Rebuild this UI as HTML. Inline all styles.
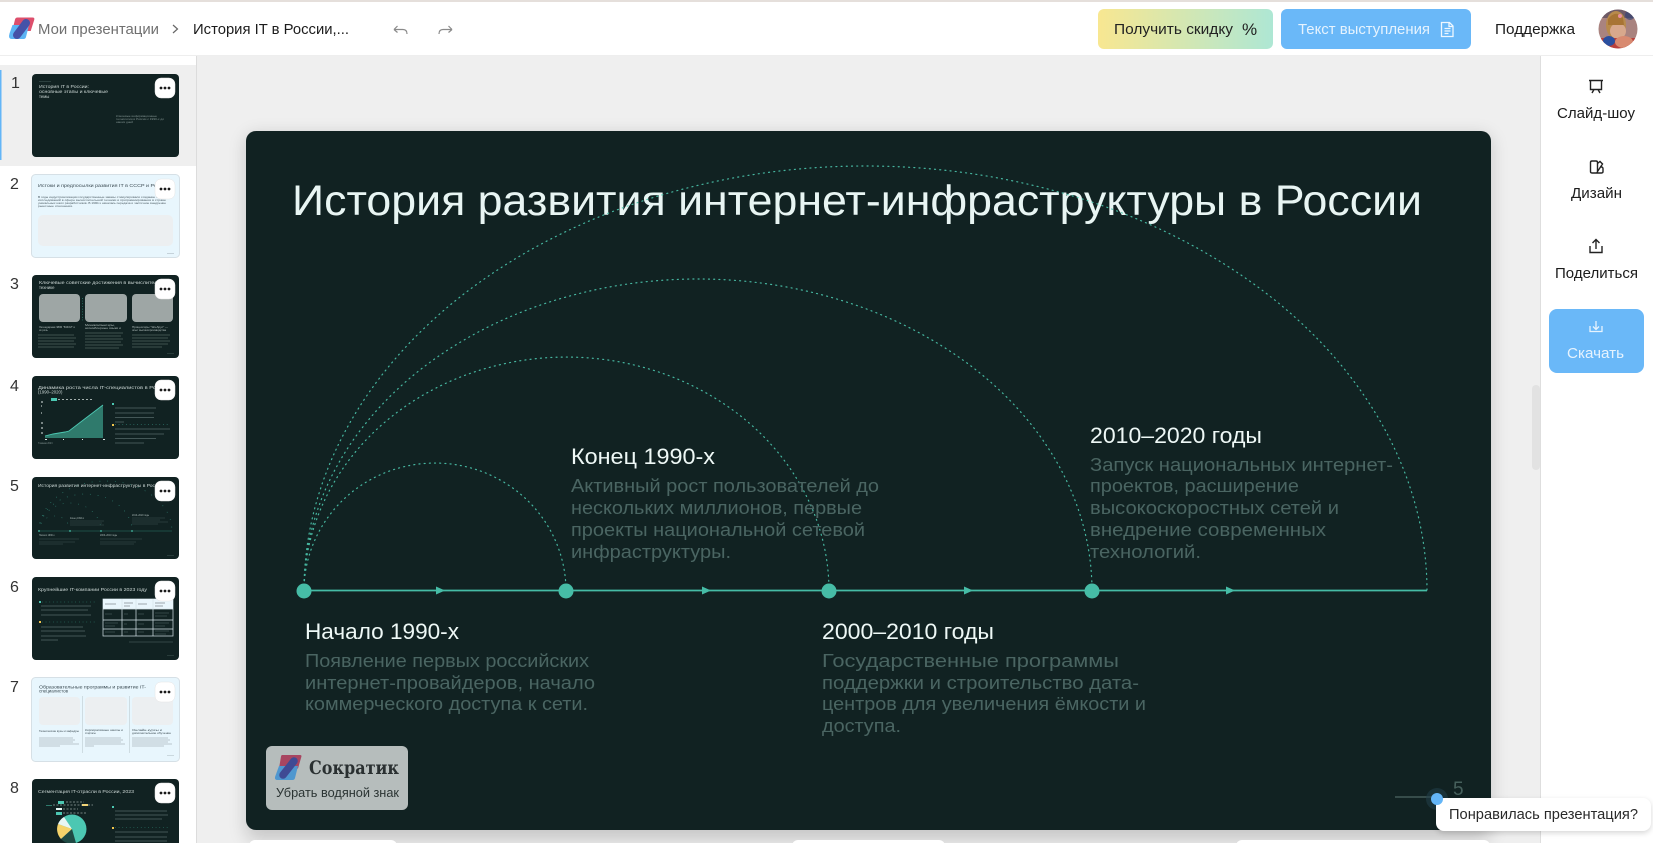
<!DOCTYPE html>
<html lang="ru"><head><meta charset="utf-8"><title>История развития интернет-инфраструктуры</title>
<style>
html,body{margin:0;padding:0;background:#fff;width:1653px;height:843px;overflow:hidden}
svg{display:block}
text{font-family:"Liberation Sans",sans-serif}
.h{font-size:22px;fill:#eef8f6}
.d{font-size:18.5px;fill:#4a6562}
.n{font-size:16px;fill:#333}
</style></head><body>
<svg xmlns="http://www.w3.org/2000/svg" width="1653" height="843" viewBox="0 0 1653 843">
<defs>
<linearGradient id="g1" x1="0" x2="1" y1="0" y2="0"><stop offset="0" stop-color="#f8e791"/><stop offset="1" stop-color="#aee7d4"/></linearGradient>
<filter id="sh" x="-10%" y="-10%" width="120%" height="120%"><feGaussianBlur stdDeviation="9"/></filter>
<filter id="sh2" x="-20%" y="-50%" width="140%" height="200%"><feGaussianBlur stdDeviation="3"/></filter>
<clipPath id="main"><rect x="197" y="56" width="1343" height="787"/></clipPath>
<clipPath id="av"><circle cx="1618" cy="29" r="19.5"/></clipPath>
<clipPath id="t8"><rect x="32" y="779" width="147" height="64"/></clipPath>
</defs>

<!-- header -->
<rect width="1653" height="843" fill="#fff"/>
<rect width="1653" height="2" fill="#e5dfdb"/>
<rect y="55.5" width="1653" height="1" fill="#dedede"/>
<path d="M17.500 17.500h15q2.500 0 1.700 2.500l-3.500 11h-18.500l2.800-11.500q.5-2 2.500-2z" fill="#dd4f6c"/>
<path d="M12.500 25h16.500l-3 12q-.5 2-2.500 2h-11.500q-3 0-3-3l.5-2.500z" fill="#5cb4f4"/>
<path d="M26 23L17 35" stroke="#4552a8" stroke-width="8" stroke-linecap="round"/>
<text x="38" y="34" font-size="15" fill="#707070" textLength="121" lengthAdjust="spacingAndGlyphs">Мои презентации</text>
<path d="M173 25l4.500 4-4.500 4" fill="none" stroke="#666" stroke-width="1.200"/>
<text x="193" y="34" font-size="15" fill="#1c1c1c" textLength="156" lengthAdjust="spacingAndGlyphs">История IT в России,...</text>
<path d="M394 29.500h9c2.500 0 4 1.500 4 4.500M394 29.500l3.500-3.500M394 29.500l3.500 3" fill="none" stroke="#8a8a8a" stroke-width="1.200"/>
<path d="M452 29.500h-9c-2.500 0-4 1.500-4 4.500M452 29.500l-3.500-3.500M452 29.500l-3.500 3" fill="none" stroke="#8a8a8a" stroke-width="1.200"/>

<rect x="1098" y="9" width="175" height="40" rx="6" fill="url(#g1)"/>
<text x="1114" y="34" font-size="15" fill="#222" textLength="119" lengthAdjust="spacingAndGlyphs">Получить скидку</text>
<text x="1242" y="35" font-size="17" fill="#222">%</text>
<rect x="1281" y="9" width="190" height="40" rx="6" fill="#6ab8f8"/>
<text x="1298" y="34" font-size="15" fill="#e6f3fe" textLength="132" lengthAdjust="spacingAndGlyphs">Текст выступления</text>
<path d="M1441.500 22.500h8l3.500 3.500v10.500h-11.500zM1449 22.500v4h4M1444.500 28.500h6M1444.500 31h6M1444.500 33.500h4" fill="none" stroke="#eef7ff" stroke-width="1.300"/>
<text x="1495" y="34" font-size="15" fill="#1c1c1c" textLength="80" lengthAdjust="spacingAndGlyphs">Поддержка</text>
<g clip-path="url(#av)">
<rect x="1598" y="9" width="40" height="40" fill="#a9837f"/>
<rect x="1598" y="9" width="40" height="9" fill="#6e5a66"/>
<ellipse cx="1616" cy="25" rx="10" ry="14" fill="#b88a4c"/>
<ellipse cx="1618" cy="31" rx="8" ry="8" fill="#d8a88c"/>
<path d="M1608 19q8-10 15-1l1 7h-16z" fill="#a87434"/>
<circle cx="1620" cy="16" r="2" fill="#e88ea0"/>
<rect x="1598" y="38" width="40" height="12" fill="#b8403c"/>
<ellipse cx="1609" cy="41" rx="6" ry="5" fill="#2a4f9f"/>
<ellipse cx="1624" cy="42" rx="9" ry="6" fill="#d88a70"/>
<circle cx="1630" cy="15" r="5" fill="#2d3f74" opacity=".6"/>
</g>

<!-- main -->
<rect x="197" y="56" width="1343" height="787" fill="#efefef"/>
<g clip-path="url(#main)">
<rect x="246" y="135" width="1245" height="705" rx="10" fill="#000" opacity=".17" filter="url(#sh)"/>
<rect x="249" y="840" width="148" height="20" rx="6" fill="#fff"/>
<rect x="792" y="840" width="153" height="20" rx="6" fill="#fff"/>
<rect x="1236" y="840" width="254" height="20" rx="6" fill="#fff"/>
</g>
<rect x="1532" y="385" width="8" height="85" rx="4" fill="#e2e2e2"/>

<!-- slide -->
<rect x="246" y="131" width="1245" height="699" rx="10" fill="#112222"/>
<text x="292" y="215" font-size="43" fill="#e8f5f3" textLength="1130" lengthAdjust="spacingAndGlyphs">История развития интернет-инфраструктуры в России</text>
<g fill="none" stroke="#4cc7ae" stroke-width="1.200" stroke-dasharray="1 4.200" stroke-linecap="round" opacity=".9">
<path d="M304 591A131 128 0 0 1 566 591"/>
<path d="M304 591A262.500 234 0 0 1 829 591"/>
<path d="M304 591A394 312 0 0 1 1092 591"/>
<path d="M304 591A561.500 425 0 0 1 1427 591"/>
</g>
<path d="M304 590.500H1427" stroke="#46bca6" stroke-width="1.800"/>
<g fill="#46bca6">
<path d="M436 586.500l9 4-9 4z"/><path d="M702 586.500l9 4-9 4z"/><path d="M964 586.500l9 4-9 4z"/><path d="M1226 586.500l9 4-9 4z"/>
<circle cx="304" cy="591" r="7.500"/><circle cx="566" cy="591" r="7.500"/><circle cx="829" cy="591" r="7.500"/><circle cx="1092" cy="591" r="7.500"/>
</g>
<text class="h" x="305" y="639" textLength="154" lengthAdjust="spacingAndGlyphs">Начало 1990-х</text>
<text class="d" x="305" y="667" textLength="284" lengthAdjust="spacingAndGlyphs">Появление первых российских</text>
<text class="d" x="305" y="689" textLength="290" lengthAdjust="spacingAndGlyphs">интернет-провайдеров, начало</text>
<text class="d" x="305" y="710" textLength="283" lengthAdjust="spacingAndGlyphs">коммерческого доступа к сети.</text>

<text class="h" x="571" y="464" textLength="144" lengthAdjust="spacingAndGlyphs">Конец 1990-х</text>
<text class="d" x="571" y="492" textLength="308" lengthAdjust="spacingAndGlyphs">Активный рост пользователей до</text>
<text class="d" x="571" y="514" textLength="291" lengthAdjust="spacingAndGlyphs">нескольких миллионов, первые</text>
<text class="d" x="571" y="536" textLength="294" lengthAdjust="spacingAndGlyphs">проекты национальной сетевой</text>
<text class="d" x="571" y="558" textLength="160" lengthAdjust="spacingAndGlyphs">инфраструктуры.</text>

<text class="h" x="822" y="639" textLength="172" lengthAdjust="spacingAndGlyphs">2000–2010 годы</text>
<text class="d" x="822" y="667" textLength="297" lengthAdjust="spacingAndGlyphs">Государственные программы</text>
<text class="d" x="822" y="689" textLength="317" lengthAdjust="spacingAndGlyphs">поддержки и строительство дата-</text>
<text class="d" x="822" y="710" textLength="324" lengthAdjust="spacingAndGlyphs">центров для увеличения ёмкости и</text>
<text class="d" x="822" y="732" textLength="79" lengthAdjust="spacingAndGlyphs">доступа.</text>

<text class="h" x="1090" y="443" textLength="172" lengthAdjust="spacingAndGlyphs">2010–2020 годы</text>
<text class="d" x="1090" y="471" textLength="303" lengthAdjust="spacingAndGlyphs">Запуск национальных интернет-</text>
<text class="d" x="1090" y="492" textLength="209" lengthAdjust="spacingAndGlyphs">проектов, расширение</text>
<text class="d" x="1090" y="514" textLength="249" lengthAdjust="spacingAndGlyphs">высокоскоростных сетей и</text>
<text class="d" x="1090" y="536" textLength="236" lengthAdjust="spacingAndGlyphs">внедрение современных</text>
<text class="d" x="1090" y="558" textLength="111" lengthAdjust="spacingAndGlyphs">технологий.</text>

<!-- watermark -->
<rect x="266" y="746" width="142" height="64" rx="6" fill="#b6bdbc"/>
<path d="M282 755h18q2 0 1.300 2l-3.300 11.500h-19l2-12q.3-1.500 1-1.500z" fill="#a84560"/>
<path d="M279 766h19l-3 12q-.5 2-2.500 2h-15q-3 0-2.500-3z" fill="#4f97cf"/>
<path d="M294 761L283 775" stroke="#3f4a94" stroke-width="7.500" stroke-linecap="round"/>
<text x="309" y="774" font-weight="700" font-size="19" fill="#2a3031" textLength="90" lengthAdjust="spacingAndGlyphs" style="font-family:'DejaVu Serif','Liberation Serif',serif">Сократик</text>
<text x="276" y="797" font-size="12.500" fill="#2b3433" textLength="123" lengthAdjust="spacingAndGlyphs">Убрать водяной знак</text>

<!-- page no. -->
<path d="M1395 797H1432" stroke="#4c6663" stroke-width="1.300"/>
<text x="1453" y="795" font-size="19" fill="#46605c">5</text>

<!-- right panel -->
<rect x="1540" y="56" width="113" height="787" fill="#fff"/>
<rect x="1540" y="56" width="1" height="787" fill="#dedede"/>
<g fill="none" stroke="#222" stroke-width="1.400">
<path d="M1589 80.500h14M1590.500 80.500v9h11v-9M1594 89.500l-2 3.500M1598 89.500l2 3.500"/>
<path d="M1592 161h4q1.500 0 1.500 1.500v9q0 1.500-1.500 1.500h-4q-1.500 0-1.500-1.500v-9q0-1.500 1.500-1.500zM1597.500 163.500l2.500-2 2.500 2.500-5 7.500M1596.500 173h5q1.500 0 1.500-1.500v-3q0-1-1-1.500h-2"/>
<path d="M1590 246v6.500h12v-6.500M1596 249v-9.500M1592.500 243l3.500-3.500 3.500 3.500"/>
</g>
<text x="1557" y="118" font-size="14.500" fill="#1c1c1c" textLength="78" lengthAdjust="spacingAndGlyphs">Слайд-шоу</text>
<text x="1571" y="198" font-size="14.500" fill="#1c1c1c" textLength="51" lengthAdjust="spacingAndGlyphs">Дизайн</text>
<text x="1555" y="278" font-size="14.500" fill="#1c1c1c" textLength="83" lengthAdjust="spacingAndGlyphs">Поделиться</text>
<rect x="1549" y="309" width="95" height="64" rx="8" fill="#6ab8f8"/>
<path d="M1590 326v5.500h12v-5.500M1596 321v8M1593 326.500l3 3 3-3" fill="none" stroke="#e6f3fe" stroke-width="1.300"/>
<text x="1567" y="358" font-size="14.500" fill="#e6f3fe" textLength="57" lengthAdjust="spacingAndGlyphs">Скачать</text>

<!-- tooltip -->
<circle cx="1437" cy="799" r="11" fill="#22404a" opacity=".55"/>
<rect x="1436" y="800" width="215" height="33" rx="8" fill="#000" opacity=".16" filter="url(#sh2)"/>
<rect x="1436" y="798" width="215" height="33" rx="8" fill="#fff"/>
<circle cx="1437" cy="799" r="6" fill="#63b5f7"/>
<text x="1449" y="819" font-size="14.500" fill="#2a2a2a" textLength="189" lengthAdjust="spacingAndGlyphs">Понравилась презентация?</text>

<!-- sidebar -->
<rect x="0" y="56" width="197" height="787" fill="#fff"/>
<rect x="196" y="56" width="1" height="787" fill="#dcdcdc"/>
<rect x="0" y="65" width="196" height="101" fill="#efefef"/>
<rect x="0" y="70" width="1.500" height="90" fill="#63b5f7"/>
<text class="n" x="11" y="88">1</text><text class="n" x="10" y="189">2</text><text class="n" x="10" y="289">3</text>
<text class="n" x="10" y="391">4</text><text class="n" x="10" y="491">5</text><text class="n" x="10" y="592">6</text>
<text class="n" x="10" y="692">7</text><text class="n" x="10" y="793">8</text>

<!-- thumb 1 -->
<rect x="32" y="74" width="147" height="83" rx="4" fill="#112222"/>
<rect x="39" y="81" width="12" height=".6" fill="#3f5553"/>
<g font-size="4.300" fill="#cdd8d6">
<text x="39" y="88" textLength="50" lengthAdjust="spacingAndGlyphs">История IT в России:</text>
<text x="39" y="93" textLength="69" lengthAdjust="spacingAndGlyphs">основные этапы и ключевые</text>
<text x="39" y="98">темы</text></g>
<g font-size="2.300" fill="#7f908e">
<text x="116" y="117" textLength="41" lengthAdjust="spacingAndGlyphs">Ключевые информационные</text>
<text x="116" y="120" textLength="48" lengthAdjust="spacingAndGlyphs">технологии в России с 1990-х до</text>
<text x="116" y="123" textLength="17" lengthAdjust="spacingAndGlyphs">наших дней</text></g>

<!-- thumb 2 -->
<rect x="31.500" y="174.500" width="148" height="83" rx="4" fill="#e8f6fd" stroke="#d6e0e6"/>
<text x="38" y="187" font-size="4.400" fill="#3a4a52" textLength="130" lengthAdjust="spacingAndGlyphs">Истоки и предпосылки развития IT в СССР и России</text>
<g font-size="2.300" fill="#4c5c64">
<text x="38" y="198" textLength="128" lengthAdjust="spacingAndGlyphs">В годы индустриализации государственные заказы стимулировали создание ЭВМ и</text>
<text x="38" y="201" textLength="128" lengthAdjust="spacingAndGlyphs">исследований в сфере вычислительной техники и программирования в стране</text>
<text x="38" y="204" textLength="128" lengthAdjust="spacingAndGlyphs">уникальных школ разработчиков. В 1990-х началась передача и частичное внедрение</text>
<text x="38" y="207" textLength="35" lengthAdjust="spacingAndGlyphs">рыночные отношения.</text></g>
<rect x="38" y="215" width="135" height="31" rx="5" fill="#eceff1"/>
<rect x="167" y="253" width="7" height=".7" fill="#b6c4ca"/>

<!-- thumb 3 -->
<rect x="32" y="275" width="147" height="83" rx="4" fill="#112222"/>
<g font-size="4.300" fill="#cdd8d6">
<text x="39" y="284" textLength="130" lengthAdjust="spacingAndGlyphs">Ключевые советские достижения в вычислительной</text>
<text x="39" y="289">технике</text></g>
<rect x="39" y="294" width="41" height="28" rx="4" fill="#9ea6a5"/>
<rect x="85" y="294" width="42" height="28" rx="4" fill="#9ea6a5"/>
<rect x="132" y="294" width="41" height="28" rx="4" fill="#9ea6a5"/>
<path d="M82.500 298v24" stroke="#3aa890" stroke-width=".7" stroke-dasharray=".7 2"/>
<g font-size="2.500" fill="#b3bfbd">
<text x="39" y="328" textLength="36" lengthAdjust="spacingAndGlyphs">Легендарная ЭВМ "БЭСМ" и</text><text x="39" y="331">их роль</text>
<text x="85" y="326" textLength="30" lengthAdjust="spacingAndGlyphs">Миникомпьютеры,</text><text x="85" y="329" textLength="36" lengthAdjust="spacingAndGlyphs">ассемблерные языки и</text>
<text x="132" y="328" textLength="36" lengthAdjust="spacingAndGlyphs">Процессоры "Эльбрус" —</text><text x="132" y="331" textLength="34" lengthAdjust="spacingAndGlyphs">опыт высокопроизводства</text></g>
<g stroke="#4e615f" stroke-width=".7">
<path d="M38 335h36M38 338h38M38 341h36M38 344h38M38 347h36"/>
<path d="M85 333h38M85 336h36M85 339h38M85 342h36M85 345h38M85 348h34"/>
<path d="M132 335h38M132 338h36M132 341h38M132 344h36M132 347h30"/>
</g>
<rect x="167" y="353" width="7" height=".5" fill="#3f5553"/>

<!-- thumb 4 -->
<rect x="32" y="376" width="147" height="83" rx="4" fill="#112222"/>
<g font-size="4.300" fill="#cdd8d6">
<text x="38" y="389" textLength="130" lengthAdjust="spacingAndGlyphs">Динамика роста числа IT-специалистов в России</text>
<text x="38" y="393.500">(1990–2020)</text></g>
<rect x="51" y="398" width="6" height="3" fill="#4cc7b2"/>
<path d="M58 399.500h35" stroke="#d5dfdd" stroke-width=".7" stroke-dasharray="2 2"/>
<path d="M41 402h2M41 406h1M41 413h1M41 423h2M41 428h2M41 433h2" stroke="#dfe8e6" stroke-width=".9"/>
<path d="M45 436l8-2 12-2 4-1 13-10 21-16v33H45z" fill="#2f7a6c"/>
<path d="M45 436l8-2 12-2 4-1 13-10 21-16" fill="none" stroke="#4cc7b2" stroke-width=".9"/>
<path d="M45 439.500h2M63 439.500h1M82 439.500h1M103 439.500h2" stroke="#dfe8e6" stroke-width=".9"/>
<rect x="112" y="403" width="2" height="2" fill="#4cc7b2"/>
<rect x="112" y="424" width="2" height="2" fill="#f0c44c"/>
<path d="M115 424.500h55" stroke="#4cc7b2" stroke-width=".6" stroke-dasharray=".7 3"/>
<g stroke="#55696a" stroke-width=".8">
<path d="M115 408h41M115 413h39M115 417.500h39M115 422h9M115 429h55M115 434h49M115 438.500h41M115 443h29"/>
</g>
<text x="38" y="444" font-size="2.300" fill="#7f908e">Главная 2023</text>

<!-- thumb 5 -->
<rect x="32" y="477" width="147" height="82" rx="4" fill="#112222"/>
<text x="38" y="487" font-size="4.400" fill="#cdd8d6" textLength="125" lengthAdjust="spacingAndGlyphs">История развития интернет-инфраструктуры в России</text>
<g fill="none" stroke="#3dab96" stroke-width=".6" stroke-dasharray=".8 7" opacity=".85">
<path d="M39 531A15.500 15 0 0 1 70 531"/><path d="M39 531A31 28 0 0 1 101 531"/><path d="M39 531A46.500 37 0 0 1 132 531"/><path d="M39 531A66.500 50 0 0 1 172 531"/>
</g>
<path d="M39 531h133" stroke="#2b7a6a" stroke-width=".5"/>
<g fill="#46bca6"><circle cx="39" cy="531" r=".9"/><circle cx="70" cy="531" r=".9"/><circle cx="101" cy="531" r=".9"/><circle cx="132" cy="531" r=".9"/></g>
<g font-size="2.300" fill="#a9b7b5"><text x="39" y="536">Начало 1990-х</text><text x="70" y="519">Конец 1990-х</text><text x="100" y="536">2000–2010 годы</text><text x="132" y="516">2010–2020 годы</text></g>
<g stroke="#3f5452" stroke-width=".5">
<path d="M39 539h40M39 542h36M39 544h24M70 521h34M70 523h32M70 525h34M100 539h42M100 542h36M100 544h34M132 518h33M132 520h28M132 522h36M132 524h26"/>
</g>
<rect x="167" y="555" width="7" height=".5" fill="#3f5553"/>

<!-- thumb 6 -->
<rect x="32" y="577" width="147" height="83" rx="4" fill="#112222"/>
<text x="38" y="591" font-size="4.600" fill="#cdd8d6" textLength="109" lengthAdjust="spacingAndGlyphs">Крупнейшие IT-компании России в 2023 году</text>
<rect x="39" y="601" width="2" height="2" fill="#4cc7b2"/><rect x="39" y="621" width="2" height="2" fill="#f0c44c"/>
<path d="M42 602h53M42 622h53" stroke="#3aa890" stroke-width=".6" stroke-dasharray=".7 3"/>
<g stroke="#55696a" stroke-width=".8"><path d="M41 606h50M41 610h47M41 615h50M41 627h42M41 631h44M41 636h45M41 640h17"/></g>
<rect x="103" y="599" width="70" height="37" fill="#112222" stroke="#d5e3e8" stroke-width=".7"/>
<rect x="103" y="599" width="70" height="10" fill="#e9f6fc"/>
<path d="M103 609h70M103 620h70M103 629h70M122 599v37M136 599v37M153 599v37" stroke="#d5e3e8" stroke-width=".7"/>
<g stroke="#53595a" stroke-width=".6"><path d="M105 604h11M124 603h9M124 606h6M138 604h9M155 603h10M155 606h8"/></g>
<g stroke="#55696a" stroke-width=".6"><path d="M105 614h7M124 614h4M138 614h6M155 613h14M155 616h12M105 623h13M105 626h10M124 624h3M138 624h6M155 623h14M155 626h10M105 632h10M124 632h4M138 632h6M155 631h14M155 634h11"/></g>
<path d="M129 642h44" stroke="#55696a" stroke-width=".6"/>
<rect x="167" y="655" width="7" height=".5" fill="#3f5553"/>

<!-- thumb 7 -->
<rect x="31.500" y="677.500" width="148" height="84" rx="4" fill="#e8f6fd" stroke="#d6e0e6"/>
<g font-size="4.500" fill="#3a4a52"><text x="39" y="688.500" textLength="107" lengthAdjust="spacingAndGlyphs">Образовательные программы и развитие IT-</text><text x="39" y="692.500">специалистов</text></g>
<rect x="39" y="697" width="41" height="28" rx="4" fill="#eceff1"/>
<rect x="85" y="697" width="42" height="28" rx="4" fill="#eceff1"/>
<rect x="132" y="697" width="41" height="28" rx="4" fill="#eceff1"/>
<path d="M82.500 696v57M129.500 696v57" stroke="#c8d5db" stroke-width=".8"/>
<g font-size="2.500" fill="#3a4a52"><text x="39" y="732" textLength="40" lengthAdjust="spacingAndGlyphs">Технические вузы и кафедры</text>
<text x="85" y="731" textLength="38" lengthAdjust="spacingAndGlyphs">Корпоративные школы и</text><text x="85" y="734">стартапы</text>
<text x="132" y="731" textLength="30" lengthAdjust="spacingAndGlyphs">Онлайн-курсы и</text><text x="132" y="734" textLength="39" lengthAdjust="spacingAndGlyphs">дополнительное обучение</text></g>
<g stroke="#8c989e" stroke-width=".6"><path d="M39 738h34M39 740h36M39 742h34M39 744h40M39 746h21M85 738h36M85 740h38M85 742h36M85 744h40M85 746h9M132 738h36M132 740h38M132 742h36M132 744h40M132 746h32"/></g>
<rect x="167" y="755" width="7" height=".6" fill="#b6c4ca"/>

<!-- thumb 8 -->
<g clip-path="url(#t8)">
<rect x="32" y="779" width="147" height="90" rx="4" fill="#112222"/>
<text x="38" y="793" font-size="4.600" fill="#cdd8d6" textLength="96" lengthAdjust="spacingAndGlyphs">Сегментация IT-отрасли в России, 2023</text>
<rect x="58" y="801" width="6" height="3" fill="#4cc7b2"/><rect x="46" y="805" width="6" height="1" fill="#2f7a6c"/><rect x="82" y="804" width="6" height="2" fill="#f5d36a"/>
<rect x="56" y="808" width="6" height="2" fill="#e8f6f4"/><rect x="56" y="812" width="6" height="3" fill="#4cc7b2"/>
<path d="M66 802h18M53 805h40M63 809h15M63 813h24" stroke="#d5dfdd" stroke-width=".6" stroke-dasharray="2 1.500"/>
<circle cx="72" cy="829" r="14.500" fill="#4cc7b2"/>
<path d="M72 829L58 824A14.500 14.500 0 0 1 64 817z" fill="#e8f6f4"/>
<path d="M72 829L61 839A14.500 14.500 0 0 1 58 824z" fill="#f5d36a"/>
<path d="M72 829L76 843A14.500 14.500 0 0 1 61 839z" fill="#1f4a44"/>
<rect x="112" y="806" width="2" height="2" fill="#4cc7b2"/><rect x="112" y="827" width="2" height="2" fill="#f0c44c"/>
<path d="M115 827.500h55" stroke="#3aa890" stroke-width=".6" stroke-dasharray=".7 3"/>
<g stroke="#55696a" stroke-width=".7"><path d="M115 811h52M115 815h53M115 819h47M115 832h53M115 837h52M115 841h52"/></g>
</g>

<!-- menu buttons -->
<g fill="#fff" stroke="#e4e4e4" stroke-width=".5">
<rect x="155" y="78" width="20" height="20" rx="6"/><rect x="155" y="179" width="20" height="20" rx="6"/><rect x="155" y="279" width="20" height="20" rx="6"/>
<rect x="155" y="380" width="20" height="20" rx="6"/><rect x="155" y="481" width="20" height="20" rx="6"/><rect x="155" y="581" width="20" height="20" rx="6"/>
<rect x="155" y="682" width="20" height="20" rx="6"/><rect x="155" y="783" width="20" height="20" rx="6"/>
</g>
<g fill="#1a1a1a">
<circle cx="161" cy="88" r="1.400"/><circle cx="165" cy="88" r="1.400"/><circle cx="169" cy="88" r="1.400"/>
<circle cx="161" cy="189" r="1.400"/><circle cx="165" cy="189" r="1.400"/><circle cx="169" cy="189" r="1.400"/>
<circle cx="161" cy="289" r="1.400"/><circle cx="165" cy="289" r="1.400"/><circle cx="169" cy="289" r="1.400"/>
<circle cx="161" cy="390" r="1.400"/><circle cx="165" cy="390" r="1.400"/><circle cx="169" cy="390" r="1.400"/>
<circle cx="161" cy="491" r="1.400"/><circle cx="165" cy="491" r="1.400"/><circle cx="169" cy="491" r="1.400"/>
<circle cx="161" cy="591" r="1.400"/><circle cx="165" cy="591" r="1.400"/><circle cx="169" cy="591" r="1.400"/>
<circle cx="161" cy="692" r="1.400"/><circle cx="165" cy="692" r="1.400"/><circle cx="169" cy="692" r="1.400"/>
<circle cx="161" cy="793" r="1.400"/><circle cx="165" cy="793" r="1.400"/><circle cx="169" cy="793" r="1.400"/>
</g>
</svg>
</body></html>
